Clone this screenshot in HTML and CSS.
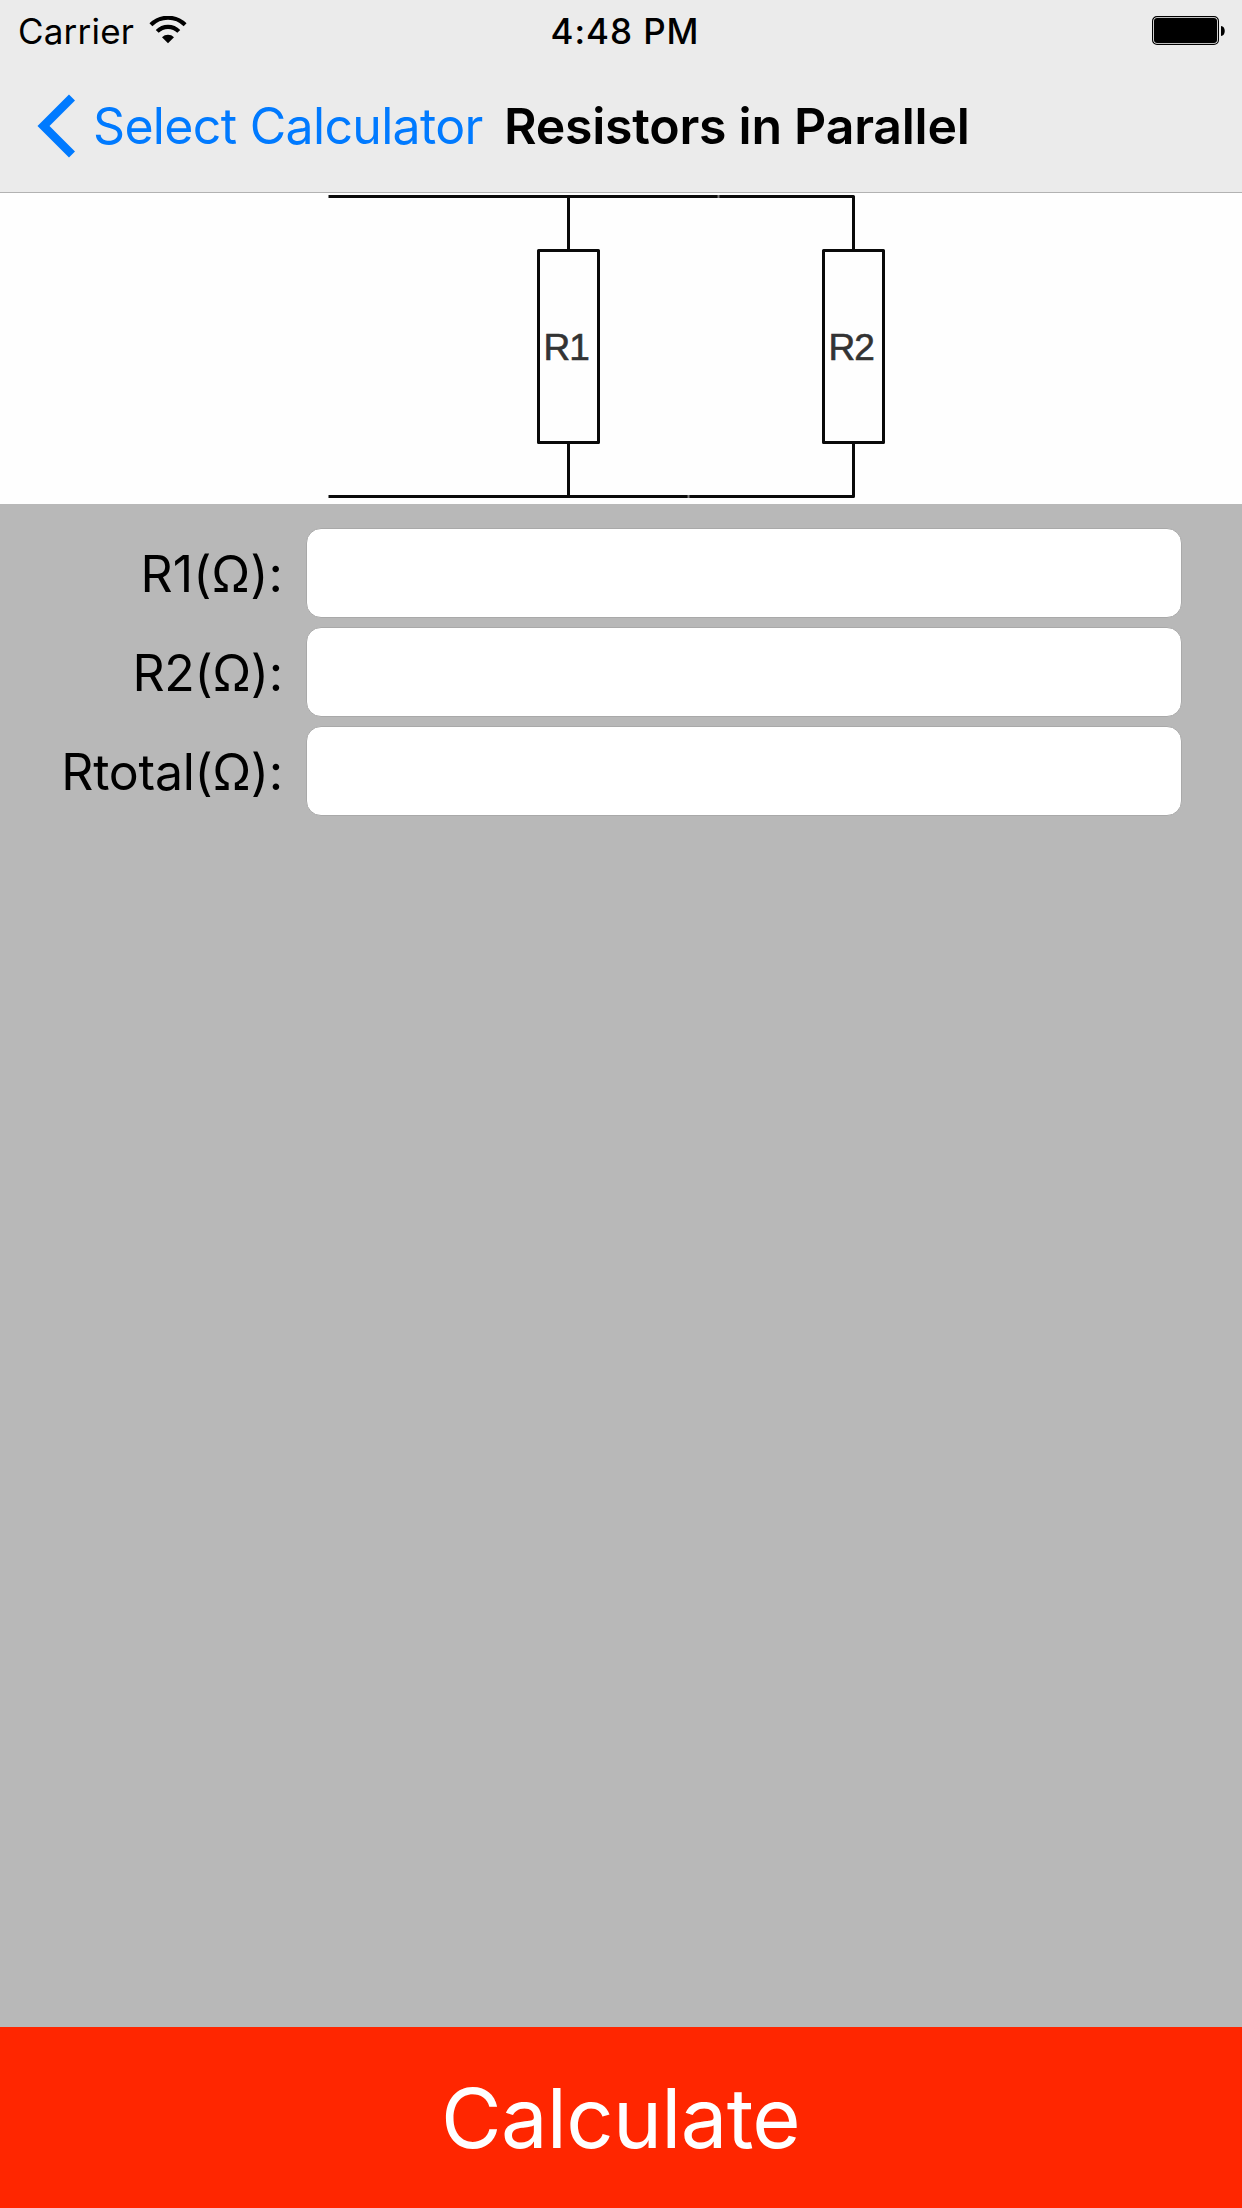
FILE: index.html
```html
<!DOCTYPE html>
<html lang="en">
<head>
<meta charset="utf-8">
<title>Resistors in Parallel</title>
<link rel="stylesheet" href="styles.css">
</head>
<body>
<div class="screen">
  <header class="header">
    <div class="status">
      <div class="status-left">
        <span class="carrier">Carrier</span>
        <svg class="wifi" width="38" height="28" viewBox="0 0 38 28">
          <path d="M1.9 8.8A24.2 24.2 0 0 1 36.1 8.8M8.2 15.4A15.2 15.2 0 0 1 29.8 15.4" fill="none" stroke="#000" stroke-width="4.1"/>
          <path d="M19 27.3L13 21.2A8.5 8.5 0 0 1 25 21.2Z"/>
        </svg>
      </div>
      <span class="time">4:48 PM</span>
      <div class="status-right">
        <svg width="74" height="30" viewBox="0 0 74 30">
          <rect x=".6" y=".6" width="65.8" height="27.8" rx="4.4" fill="#fff" stroke="#000" stroke-width="1.2"/>
          <rect x="2" y="2" width="63" height="25" rx="3"/>
          <path d="M69 10C74 10 74 20 69 20Z"/>
        </svg>
      </div>
    </div>
    <nav class="nav">
      <svg class="chevron" width="38" height="64" viewBox="0 0 38 64">
        <path d="M35 3.500L6.500 32L35 60.500" fill="none" stroke="#007aff" stroke-width="8.5"/>
      </svg>
      <a class="back">Select Calculator</a>
      <h1 class="title">Resistors in Parallel</h1>
    </nav>
  </header>
  <div class="diagram">
    <svg width="1242" height="311" viewBox="0 193 1242 311">
      <g fill="none" stroke="#0a0a0a" stroke-width="3" stroke-linejoin="round">
        <path d="M328.500 196.500H853.500V250.500M568.500 196.500V250.500M328.500 496.500H853.500V442.500M568.500 496.500V442.500"/>
        <rect x="538.5" y="250.500" width="60" height="192"/>
        <rect x="823.5" y="250.500" width="60" height="192"/>
      </g>
      <path d="M718.500 194V199M688.500 494V499" stroke="#fff" stroke-opacity=".45" stroke-width="2"/>
      <text class="part" x="543.5" y="360">R1</text>
      <text class="part" x="828.5" y="360">R2</text>
    </svg>
  </div>
  <main class="form">
    <label class="row"><span class="label label-r1">R1(Ω):</span><input class="field" type="text"></label>
    <label class="row"><span class="label">R2(Ω):</span><input class="field" type="text"></label>
    <label class="row"><span class="label">Rtotal(Ω):</span><input class="field" type="text"></label>
  </main>
  <button class="calculate">Calculate</button>
</div>
</body>
</html>
```
FILE: styles.css
```css
* { box-sizing: border-box; }
body {
  margin: 0;
  font-family: Inter, "Liberation Sans", sans-serif;
  color: #000;
}
.screen {
  width: 1242px;
  height: 2208px;
  display: flex;
  flex-direction: column;
  background: #b8b8b8;
  overflow: hidden;
}
.header {
  height: 193px;
  background: #ebebeb;
  border-bottom: 1px solid #b2b2b2;
}
.status {
  height: 60px;
  padding: 2px 16px 0 18px;
  display: grid;
  grid-template-columns: 1fr auto 1fr;
  align-items: center;
  font-size: 35px;
  line-height: 58px;
}
.status-left { display: flex; align-items: center; gap: 15px; }
.status-right { display: flex; justify-content: flex-end; }
.carrier { letter-spacing: .2px; }
.wifi { margin-top: -3px; }
.time { padding-left: 6px; font-weight: 500; letter-spacing: .95px; }
.nav {
  height: 132px;
  padding-left: 37px;
  display: flex;
  align-items: center;
  font-size: 50px;
  white-space: nowrap;
}
.back { margin-left: 18px; width: 411px; color: #007aff; letter-spacing: -.68px; }
.title { margin: 0; font-size: 50px; font-weight: 600; letter-spacing: -.25px; }
.diagram { height: 311px; background: #fefefe; }
.diagram svg { display: block; }
.part {
  font: 37px "Liberation Sans", sans-serif;
  letter-spacing: -1px;
  fill: #333;
  stroke: #333;
  stroke-width: .6px;
}
.form {
  flex: 1;
  padding: 24px 60px 0 0;
  display: flex;
  flex-direction: column;
  gap: 9px;
}
.row {
  height: 90px;
  display: grid;
  grid-template-columns: 283px 1fr;
  column-gap: 23px;
  align-items: center;
  font-size: 50px;
}
.label { padding-top: 2px; text-align: right; white-space: nowrap; letter-spacing: -.25px; }
.label-r1 { letter-spacing: .1px; }
.field {
  width: 100%;
  height: 90px;
  padding: 0 21px;
  border: 1px solid #a9a9a9;
  border-radius: 15px;
  background: #fff;
  font: inherit;
  outline: none;
}
.calculate {
  height: 181px;
  padding: 1px 1px 0 0;
  border: 0;
  background: #ff2600;
  color: #fff;
  font: 83px Inter, "Liberation Sans", sans-serif;
  letter-spacing: -.7px;
}
```
